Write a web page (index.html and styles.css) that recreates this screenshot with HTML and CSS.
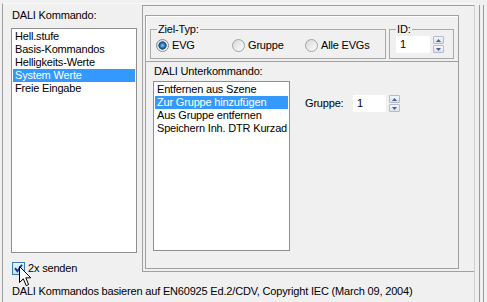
FILE: index.html
```html
<!DOCTYPE html>
<html>
<head>
<meta charset="utf-8">
<link rel="stylesheet" href="styles.css">
</head>
<body>
<div class="window">
  <div class="content">
    <div class="top">
      <div class="left-col">
        <div class="label">DALI Kommando:</div>
        <div class="listbox main-list">
          <div class="item">Hell.stufe</div>
          <div class="item">Basis-Kommandos</div>
          <div class="item">Helligkeits-Werte</div>
          <div class="item sel">System Werte</div>
          <div class="item">Freie Eingabe</div>
        </div>
        <div class="check">
          <span class="cb"><svg width="11" height="11" viewBox="0 0 11 11"><path d="M2 5.2 L4.4 8.2 L9 1.8" fill="none" stroke="#1d3a8a" stroke-width="1.9"/></svg></span>
          <span>2x senden</span>
        </div>
      </div>
      <div class="panel">
        <div class="sec-top">
          <fieldset class="grp ziel">
            <legend>Ziel-Typ:</legend>
            <div class="radios">
              <span class="radio r1"><span class="rb on"></span>EVG</span>
              <span class="radio r2"><span class="rb"></span>Gruppe</span>
              <span class="radio r3"><span class="rb"></span>Alle EVGs</span>
            </div>
          </fieldset>
          <fieldset class="grp idg">
            <legend>ID:</legend>
            <div class="spin-row">
              <div class="input id-input">1</div>
              <div class="spinner">
                <div class="sb"><svg width="5" height="3" viewBox="0 0 5 3"><path d="M0 3 L2.5 0 L5 3 Z" fill="#4f6186"/></svg></div>
                <div class="sb"><svg width="5" height="3" viewBox="0 0 5 3"><path d="M0 0 L2.5 3 L5 0 Z" fill="#4f6186"/></svg></div>
              </div>
            </div>
          </fieldset>
        </div>
        <div class="sec-bottom">
          <div class="label sub">DALI Unterkommando:</div>
          <div class="sub-row">
            <div class="listbox sub-list">
              <div class="item">Entfernen aus Szene</div>
              <div class="item sel">Zur Gruppe hinzufügen</div>
              <div class="item">Aus Gruppe entfernen</div>
              <div class="item">Speichern Inh. DTR Kurzad</div>
            </div>
            <div class="gruppe">
              <span class="glabel">Gruppe:</span>
              <div class="input g-input">1</div>
              <div class="spinner">
                <div class="sb"><svg width="5" height="3" viewBox="0 0 5 3"><path d="M0 3 L2.5 0 L5 3 Z" fill="#4f6186"/></svg></div>
                <div class="sb"><svg width="5" height="3" viewBox="0 0 5 3"><path d="M0 0 L2.5 3 L5 0 Z" fill="#4f6186"/></svg></div>
              </div>
            </div>
          </div>
        </div>
      </div>
    </div>
    <div class="footer">DALI Kommandos basieren auf EN60925 Ed.2/CDV, Copyright IEC (March 09, 2004)</div>
  </div>
  <div class="gutter"><div class="gline"></div></div>
  <svg class="cursor" width="13" height="21" viewBox="0 0 13 21"><path d="M0.5 0.5 L0.5 16.5 L4.3 12.8 L7.2 19.6 L9.6 18.6 L6.8 11.8 L11.8 11.8 Z" fill="#fff" stroke="#000" stroke-width="1" stroke-linejoin="miter"/></svg>
</div>
</body>
</html>
```

FILE: styles.css
```css
html, body {
  margin: 0;
  background: #f0f0f0;
}
body {
  font: 11px/13px "Liberation Sans", Arial, sans-serif;
  letter-spacing: -0.18px;
  color: #000;
}
.window {
  position: relative;
  width: 487px;
  height: 302px;
  display: flex;
  padding: 3px 0 0 2px;
  box-sizing: border-box;
  overflow: hidden;
}
.content {
  width: 472px;
  border-left: 1px solid #a0a0a0;
  border-top: 1px solid #fafafa;
  box-sizing: border-box;
  display: flex;
  flex-direction: column;
}
.top {
  display: flex;
  align-items: flex-start;
}
.left-col {
  padding: 5px 0 0 8px;
  width: 126px;
  flex: none;
}
.label {
  padding-left: 1px;
  height: 13px;
  margin-bottom: 6px;
  white-space: nowrap;
}
.listbox {
  background: #fff;
  border: 1px solid #8e8f8f;
  box-sizing: border-box;
  padding: 1px;
}
.main-list {
  height: 225px;
}
.item {
  height: 13px;
  line-height: 13px;
  padding-left: 2px;
  white-space: nowrap;
  overflow: hidden;
}
.item.sel {
  background: #3399ff;
  color: #fff;
}
.check {
  display: flex;
  align-items: center;
  margin-top: 9px;
  padding-left: 1px;
  height: 13px;
}
.cb {
  width: 13px;
  height: 13px;
  box-sizing: border-box;
  border: 1px solid #3d7bad;
  background: linear-gradient(#e3f3fc, #bfe2f5);
  margin-right: 3px;
  display: flex;
}
.panel {
  margin: 1px 0 0 5px;
  height: 267px;
  box-sizing: border-box;
  border: 1px solid #a0a0a0;
  border-right: none;
  padding: 9px 15px 2px 2px;
  flex: 1;
  display: flex;
  flex-direction: column;
}
.sec-top {
  border: 1px solid #a0a0a0;
  box-shadow: inset 1px 1px #fff;
  padding: 7px 4px 2px 4px;
  display: flex;
  gap: 3px;
}
.grp {
  margin: 0;
  border: 1px solid #a9a9a9;
  box-sizing: border-box;
  min-width: 0;
}
.grp legend {
  padding: 0 1px;
  line-height: 13px;
}
.ziel {
  width: 236px;
  padding: 3px 0 6px 5px;
}
.ziel legend {
  margin-left: 1px;
}
.radios {
  display: flex;
  height: 13px;
}
.radio {
  display: flex;
  align-items: center;
  white-space: nowrap;
}
.r1 { width: 76px; }
.r2 { width: 73px; }
.rb {
  width: 13px;
  height: 13px;
  box-sizing: border-box;
  border-radius: 50%;
  border: 1px solid #a2a2a2;
  background: linear-gradient(135deg, #d8d8d8, #fdfdfd);
  margin-right: 3px;
  flex: none;
}
.rb.on {
  border-color: #8a8a8a;
  background:
    radial-gradient(circle, #8fd0fa 0, #3d87c4 1.8px, #1d4f7e 3.4px, #2b5d8a 3.9px, transparent 4.4px),
    linear-gradient(135deg, #d8d8d8, #fdfdfd);
}
.idg {
  width: 65px;
  padding: 0 0 5px 6px;
}
.spin-row {
  display: flex;
  gap: 3px;
  height: 17px;
}
.input {
  height: 17px;
  background: #fff;
  box-sizing: border-box;
  padding-left: 4px;
  line-height: 17px;
}
.id-input { width: 34px; }
.g-input { width: 33px; }
.spinner {
  width: 11px;
  height: 17px;
  display: flex;
  flex-direction: column;
  gap: 1px;
}
.sb {
  height: 8px;
  box-sizing: border-box;
  border: 1px solid #b4bccb;
  border-radius: 1px;
  background: linear-gradient(#f4f6fa, #dbe1ec);
  display: flex;
  align-items: center;
  justify-content: center;
}
.sb svg { display: block; }
.sec-bottom {
  flex: 1;
  border: 1px solid #a0a0a0;
  border-top: none;
  padding: 3px 0 0 7px;
}
.sub {
  margin-bottom: 3px;
}
.sub-row {
  display: flex;
  align-items: flex-start;
}
.sub-list {
  width: 137px;
  height: 170px;
}
.gruppe {
  display: flex;
  align-items: center;
  margin: 14px 0 0 15px;
  height: 17px;
  gap: 0;
}
.glabel {
  width: 48px;
}
.gruppe .spinner {
  margin-left: 3px;
}
.footer {
  padding: 10px 0 0 9px;
  white-space: nowrap;
}
.gutter {
  width: 13px;
  margin-top: 2px;
  border-left: 1px solid #cfcfcf;
  box-sizing: border-box;
}
.gline {
  margin-left: 4px;
  width: 5px;
  height: 100%;
  box-sizing: border-box;
  border-left: 1px solid #9a9a9a;
  border-right: 1px solid #9a9a9a;
}
.cursor {
  position: absolute;
  left: 19px;
  top: 266px;
}
```
